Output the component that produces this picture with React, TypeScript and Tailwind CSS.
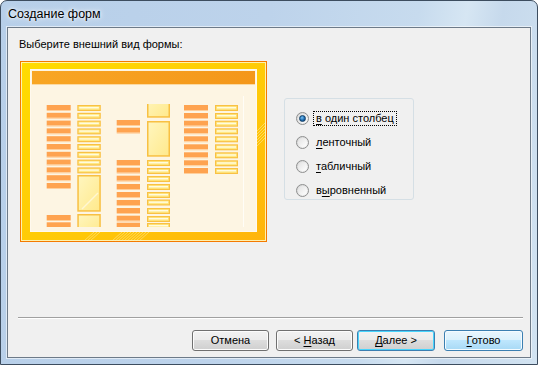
import React from 'react';

const font = { fontFamily: '"Liberation Sans", Arial, sans-serif' };

// row positions inside the preview picture (relative to its top-left)
const col1Labels = [44, 51.8, 59.6, 67.4, 75.2, 83, 90.8, 98.6, 106.4, 114.2, 122, 154, 161.3];
const col2Fields = [44, 51.8, 59.6, 67.4, 75.2, 83, 90.8, 98.6, 106.4];
const col3Labels = [59, 66.7, 99, 106.7, 114.7, 123, 131, 139, 147, 154.7, 161.7];
const col4Fields = [99, 107, 115, 123, 131, 138.5, 147, 155, 162];
const col56 = [44, 52, 59.7, 67.3, 75.3, 83.3, 91.3, 99.3, 107];

function LabelBar({ x, y, w = 24 }: { x: number; y: number; w?: number }) {
  return (
    <g>
      <rect x={x} y={y} width={w} height={5} fill="#fea350" />
      <rect x={x} y={y + 5} width={w} height={1} fill="#ffcf9c" />
    </g>
  );
}

function Field({ x, y, w = 23.5 }: { x: number; y: number; w?: number }) {
  return (
    <g>
      <rect x={x} y={y} width={w} height={6} fill="#f9c144" />
      <rect x={x + 1.2} y={y + 1.2} width={w - 2.4} height={3.6} fill="#ffe985" />
      <rect x={x + 2} y={y + 2} width={w - 4} height={1.4} fill="#fffbe0" />
    </g>
  );
}

function BigBox({ x, y, w, h }: { x: number; y: number; w: number; h: number }) {
  return <rect x={x + 0.75} y={y + 0.75} width={w - 1.5} height={h - 1.5} fill="url(#boxG)" stroke="#f8c043" strokeWidth={1.5} />;
}

function FormPreview() {
  return (
    <svg width={247} height={181} viewBox="0 0 247 181" className="block">
      <defs>
        <linearGradient id="frameG" x1="0" y1="0" x2="1" y2="1">
          <stop offset="0" stopColor="#ffdc00" />
          <stop offset="0.6" stopColor="#ffc808" />
          <stop offset="1" stopColor="#ffb40c" />
        </linearGradient>
        <linearGradient id="headG" x1="0" y1="0" x2="1" y2="0">
          <stop offset="0" stopColor="#f8a624" />
          <stop offset="1" stopColor="#f4971a" />
        </linearGradient>
        <linearGradient id="boxG" x1="0" y1="0" x2="1" y2="1">
          <stop offset="0" stopColor="#fff6bf" />
          <stop offset="1" stopColor="#ffe98c" />
        </linearGradient>
        <clipPath id="body">
          <rect x={11} y={43} width={212} height={123} />
        </clipPath>
      </defs>
      <rect x={0.5} y={0.5} width={246} height={180} fill="url(#frameG)" stroke="#f47a00" />
      <rect x={1.5} y={1.5} width={244} height={178} fill="none" stroke="#fff6c0" strokeOpacity={0.9} />
      <g stroke="#fff3c0" strokeOpacity={0.45} strokeWidth={1}>
        {[0, 3, 6].map((d) => (
          <line key={'a' + d} x1={64 + d} y1={180} x2={74 + d} y2={171} />
        ))}
        {[0, 3, 6, 9, 12, 15, 18, 21, 24, 27].map((d) => (
          <line key={'b' + d} x1={92 + d} y1={180} x2={102 + d} y2={171} />
        ))}
        {[0, 3, 6, 9, 12, 15].map((d) => (
          <line key={'c' + d} x1={237} y1={70 + d} x2={246} y2={61 + d} />
        ))}
      </g>
      <rect x={10.5} y={8.5} width={226} height={162} fill="#fdf5e3" stroke="#fff9ee" />
      <rect x={12} y={10} width={223} height={13} fill="url(#headG)" />
      <rect x={12} y={23} width={223} height={1} fill="#fbd9a2" />
      <line x1={223.5} y1={35} x2={223.5} y2={166} stroke="#fffdf7" strokeWidth={1} />
      <g clipPath="url(#body)">
        {col1Labels.map((y) => (
          <LabelBar key={'l1' + y} x={26.7} y={y} />
        ))}
        {col2Fields.map((y) => (
          <Field key={'f2' + y} x={57.3} y={y} />
        ))}
        <BigBox x={57.3} y={114} w={23.5} h={36.7} />
        <line x1={62} y1={148} x2={78} y2={132} stroke="#fffbe8" strokeWidth={1.5} strokeOpacity={0.7} />
        <BigBox x={57.3} y={153} w={23.5} h={20} />
        {col3Labels.map((y) => (
          <LabelBar key={'l3' + y} x={96.7} y={y} w={23.3} />
        ))}
        <BigBox x={127} y={30} w={23} h={26.7} />
        <BigBox x={127} y={60} w={23} h={35.7} />
        {col4Fields.map((y) => (
          <Field key={'f4' + y} x={127} y={y} w={23} />
        ))}
        {col56.map((y) => (
          <LabelBar key={'l5' + y} x={164} y={y} />
        ))}
        {col56.map((y) => (
          <Field key={'f6' + y} x={195} y={y} w={23} />
        ))}
      </g>
    </svg>
  );
}

function Radio({ checked }: { checked?: boolean }) {
  return (
    <span className="relative flex h-[13px] w-[13px] shrink-0 items-center justify-center rounded-full border border-[#8e8f8f] bg-[linear-gradient(135deg,#d4d4d4,#f6f6f6)]">
      <span className="h-[9px] w-[9px] rounded-full bg-[linear-gradient(135deg,#e2e2e2,#ffffff)]" />
      {checked && (
        <span className="absolute left-[2px] top-[2px] h-[7px] w-[7px] rounded-full border border-[#123f66] bg-[radial-gradient(circle_at_40%_35%,#7cc4f5,#1d6bb0_55%,#0a3d6e)]" />
      )}
    </span>
  );
}

function Mn({ children }: { children: React.ReactNode }) {
  return <span className="underline underline-offset-[2px]">{children}</span>;
}

function Option({ checked, pre, mn, post }: { checked?: boolean; pre?: string; mn: string; post: string }) {
  return (
    <div className="flex h-[24px] items-center">
      <Radio checked={checked} />
      <span
        className={
          'ml-[4px] border px-[2px] leading-[13px] ' + (checked ? 'border-dotted border-black' : 'border-transparent')
        }
      >
        {pre}
        <Mn>{mn}</Mn>
        {post}
      </span>
    </div>
  );
}

type BtnKind = 'normal' | 'default' | 'hot';

function Btn({ w, kind = 'normal', children }: { w: string; kind?: BtnKind; children: React.ReactNode }) {
  const skin =
    kind === 'hot'
      ? 'border-[#3c7fb1] bg-[linear-gradient(#eaf6fd_0%,#d9f0fc_50%,#bee6fd_50%,#a7d9f5_100%)] shadow-[inset_0_0_0_1px_#f4fbff]'
      : kind === 'default'
        ? 'border-[#3c7fb1] bg-[linear-gradient(#f2f2f2_0%,#ebebeb_50%,#dddddd_50%,#cfcfcf_100%)] shadow-[inset_0_0_0_1px_#48d4fc]'
        : 'border-[#707070] bg-[linear-gradient(#f2f2f2_0%,#ebebeb_50%,#dddddd_50%,#cfcfcf_100%)] shadow-[inset_0_0_0_1px_#fcfcfc]';
  return (
    <div className={'flex h-[21px] items-center justify-center rounded-[3px] border text-[11px] text-black ' + w + ' ' + skin}>
      <span>{children}</span>
    </div>
  );
}

export default function App() {
  return (
    <div
      style={font}
      className="relative flex h-[365px] w-[538px] flex-col overflow-hidden rounded-t-[7px] border border-[#3d4d5f] bg-[linear-gradient(100deg,#b7cfe9_0%,#bdd3eb_45%,#c7dbee_70%,#d6e6f3_78%,#c6d9ec_84%,#d2e3f1_100%)] text-black"
    >
      <div className="flex h-[26px] items-center pl-[7px] pt-[1px] text-[12.5px] [text-shadow:0_0_6px_#ffffff,0_0_3px_#ffffff]">
        Создание форм
      </div>
      <div className="mx-[6px] flex h-[331px] flex-col border border-[#6d7a88] bg-[#f0f0f0] shadow-[0_0_0_1px_rgba(255,255,255,0.55)]">
        <div className="pl-[11px] pt-[10px] text-[11px] leading-[13px]">Выберите внешний вид формы:</div>
        <div className="mt-[10px] flex items-start pl-[12px]">
          <FormPreview />
          <div className="ml-[17px] mt-[37px] h-[102px] w-[130px] rounded-[3px] border border-[#d5dfe5] pl-[11px] pt-[7px] text-[11px]">
            <Option checked pre="" mn="в" post=" один столбец" />
            <Option mn="л" post="енточный" />
            <Option mn="т" post="абличный" />
            <Option pre="в" mn="ы" post="ровненный" />
          </div>
        </div>
        <div className="mt-auto">
          <div className="ml-[10px] mr-[7px] h-[2px] border-t border-b border-t-[#a0a0a0] border-b-white" />
          <div className="mt-[11px] mb-[6px] flex justify-end pr-[7px]">
            <Btn w="w-[77px]">Отмена</Btn>
            <Btn w="ml-[7px] w-[77px]">
              {'< '}
              <Mn>Н</Mn>азад
            </Btn>
            <Btn w="ml-[4px] w-[78px]" kind="default">
              <Mn>Д</Mn>
              {'алее >'}
            </Btn>
            <Btn w="ml-[9px] w-[79px]" kind="hot">
              <Mn>Г</Mn>отово
            </Btn>
          </div>
        </div>
      </div>
    </div>
  );
}
